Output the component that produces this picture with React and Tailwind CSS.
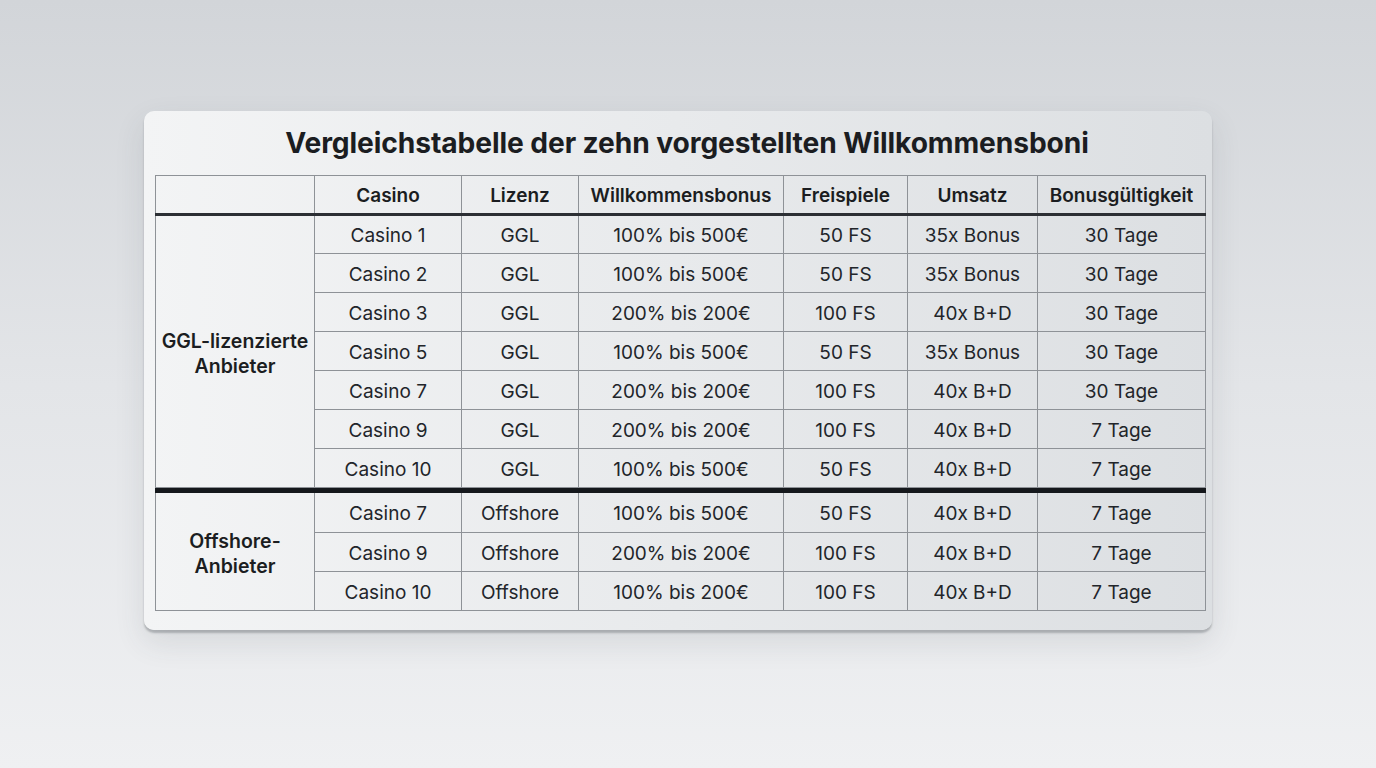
import React from "react";

const ggl = [
  ["Casino 1", "GGL", "100% bis 500€", "50 FS", "35x Bonus", "30 Tage"],
  ["Casino 2", "GGL", "100% bis 500€", "50 FS", "35x Bonus", "30 Tage"],
  ["Casino 3", "GGL", "200% bis 200€", "100 FS", "40x B+D", "30 Tage"],
  ["Casino 5", "GGL", "100% bis 500€", "50 FS", "35x Bonus", "30 Tage"],
  ["Casino 7", "GGL", "200% bis 200€", "100 FS", "40x B+D", "30 Tage"],
  ["Casino 9", "GGL", "200% bis 200€", "100 FS", "40x B+D", "7 Tage"],
  ["Casino 10", "GGL", "100% bis 500€", "50 FS", "40x B+D", "7 Tage"],
];
const off = [
  ["Casino 7", "Offshore", "100% bis 500€", "50 FS", "40x B+D", "7 Tage"],
  ["Casino 9", "Offshore", "200% bis 200€", "100 FS", "40x B+D", "7 Tage"],
  ["Casino 10", "Offshore", "100% bis 200€", "100 FS", "40x B+D", "7 Tage"],
];
const headers = ["Casino", "Lizenz", "Willkommensbonus", "Freispiele", "Umsatz", "Bonusgültigkeit"];

export default function App() {
  const font = { fontFamily: "Inter, 'Noto Sans', sans-serif" };
  return (
    <div
      className="w-[1376px] h-[768px] overflow-hidden bg-gradient-to-b from-[#d2d5d9] via-[#e3e5e8] to-[#eff0f2] pt-[111px]"
      style={font}
    >
      <div className="ml-[144px] w-[1068px] h-[519px] rounded-[10px] bg-gradient-to-r from-[#f3f4f5] via-[#e8eaec] to-[#dcdfe2] shadow-[0_3px_2px_rgba(80,85,92,0.35),0_12px_30px_rgba(60,65,75,0.12)] px-[11px] pt-[14px]">
        <h1 className="text-center pl-[18px] text-[28.2px] leading-[36px] font-bold text-[#1b1d21] tracking-[-0.1px] h-[50px]">
          Vergleichstabelle der zehn vorgestellten Willkommensboni
        </h1>
        <table className="table-fixed border-collapse w-[1050px] text-[#22252a]">
          <colgroup>
            <col className="w-[159px]" />
            <col className="w-[147px]" />
            <col className="w-[117px]" />
            <col className="w-[205px]" />
            <col className="w-[124px]" />
            <col className="w-[130px]" />
            <col className="w-[168px]" />
          </colgroup>
          <thead>
            <tr className="h-[39px]">
              <th className="border border-[#8e9297] border-b-[3px] border-b-[#2c2f34]"></th>
              {headers.map((h) => (
                <th
                  key={h}
                  className="border border-[#8e9297] border-b-[3px] border-b-[#2c2f34] pt-[4px] text-center text-[19px] font-semibold text-[#1b1d21]"
                >
                  {h}
                </th>
              ))}
            </tr>
          </thead>
          <tbody>
            {ggl.map((r, i) => (
              <tr key={"g" + i} className="h-[39px]">
                {i === 0 && (
                  <td
                    rowSpan={7}
                    className="border border-[#8e9297] border-t-[3px] border-t-[#2c2f34] pt-[4px] text-center text-[19.5px] leading-[25px] font-semibold text-[#1b1d21]"
                  >
                    GGL-lizenzierte
                    <br />
                    Anbieter
                  </td>
                )}
                {r.map((c, j) => (
                  <td
                    key={j}
                    className="border border-[#8e9297] pt-[4px] text-center text-[19px] font-normal"
                  >
                    {c}
                  </td>
                ))}
              </tr>
            ))}
            <tr className="h-[3px]">
              <td colSpan={7} className="p-0 border-x border-x-[#8e9297]"></td>
            </tr>
            {off.map((r, i) => (
              <tr key={"o" + i} className={i === 0 ? "h-[42px]" : "h-[39px]"}>
                {i === 0 && (
                  <td
                    rowSpan={3}
                    className="border border-[#8e9297] border-t-[5px] border-t-[#15181c] pt-[4px] text-center text-[19.5px] leading-[25px] font-semibold text-[#1b1d21]"
                  >
                    Offshore-
                    <br />
                    Anbieter
                  </td>
                )}
                {r.map((c, j) => (
                  <td
                    key={j}
                    className={
                      "border border-[#8e9297] pt-[4px] text-center text-[19px] font-normal" +
                      (i === 0 ? " border-t-[5px] border-t-[#15181c]" : "")
                    }
                  >
                    {c}
                  </td>
                ))}
              </tr>
            ))}
          </tbody>
        </table>
      </div>
    </div>
  );
}
